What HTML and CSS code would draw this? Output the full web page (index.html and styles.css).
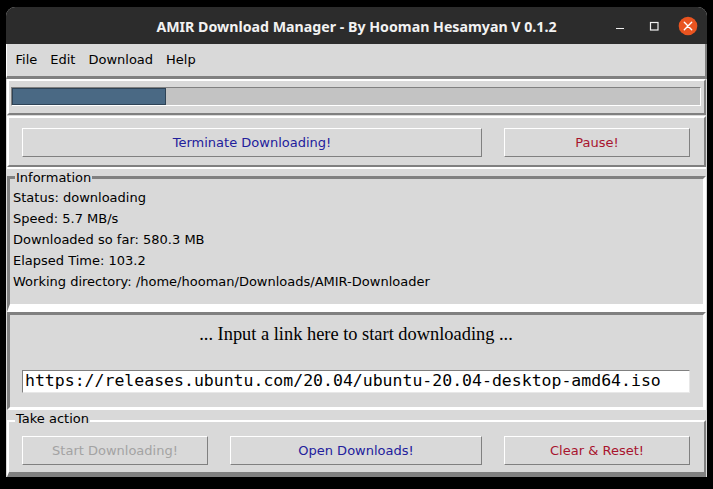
FILE: index.html
```html
<!DOCTYPE html>
<html>
<head>
<meta charset="utf-8">
<link rel="stylesheet" href="styles.css">
</head>
<body>
<div class="window">
  <header class="titlebar">
    <div class="spacer"></div>
    <h1 class="title">AMIR Download Manager - By Hooman Hesamyan V 0.1.2</h1>
    <div class="controls">
      <svg class="ctl-min" width="10" height="10" viewBox="0 0 10 10"><line x1="1" y1="7.5" x2="9" y2="7.5" stroke="#f0f0f0" stroke-width="1.2"/></svg>
      <svg class="ctl-max" width="10" height="10" viewBox="0 0 10 10"><rect x="1.5" y="1.5" width="7.5" height="7.5" fill="none" stroke="#f0f0f0" stroke-width="1.2"/></svg>
      <svg class="ctl-close" width="20" height="20" viewBox="0 0 20 20"><circle cx="10" cy="10" r="9.3" fill="#e95420"/><path d="M6.3 6.3 L13.7 13.7 M13.7 6.3 L6.3 13.7" stroke="#ffffff" stroke-width="1.4" stroke-linecap="round"/></svg>
    </div>
  </header>
  <nav class="menubar">
    <span class="menu-item">File</span>
    <span class="menu-item">Edit</span>
    <span class="menu-item">Download</span>
    <span class="menu-item">Help</span>
  </nav>
  <main class="content">
    <section class="progress-frame">
      <div class="trough"><div class="bar" style="width:154px"></div></div>
    </section>
    <section class="btn-frame">
      <div class="btn btn-blue">Terminate Downloading!</div>
      <div class="btn btn-red">Pause!</div>
    </section>
    <div class="info-wrap">
      <fieldset class="info">
        <legend class="info-legend">Information</legend>
        <p class="info-line">Status: downloading</p>
        <p class="info-line">Speed: 5.7 MB/s</p>
        <p class="info-line">Downloaded so far: 580.3 MB</p>
        <p class="info-line">Elapsed Time: 103.2</p>
        <p class="info-line">Working directory: /home/hooman/Downloads/AMIR-Downloader</p>
      </fieldset>
    </div>
    <section class="input-frame">
      <p class="prompt">... Input a link here to start downloading ...</p>
      <div class="entry">https://releases.ubuntu.com/20.04/ubuntu-20.04-desktop-amd64.iso</div>
    </section>
    <fieldset class="action">
      <legend class="action-legend">Take action</legend>
      <div class="action-grid">
        <div class="btn btn-disabled">Start Downloading!</div>
        <div class="btn btn-blue">Open Downloads!</div>
        <div class="btn btn-red">Clear &amp; Reset!</div>
      </div>
    </fieldset>
  </main>
</div>
</body>
</html>
```
FILE: styles.css
```css
html, body {
  margin: 0;
  padding: 0;
  background: #000;
  width: 713px;
  height: 489px;
  overflow: hidden;
}

.window {
  margin: 7px 0 0 6px;
  width: 701px;
  border-radius: 9px 9px 0 0;
  overflow: hidden;
  background: #d9d9d9;
  font-family: "DejaVu Sans", sans-serif;
  font-size: 13px;
  color: #000;
}

.titlebar {
  height: 37px;
  background: #2c2c2c;
  display: grid;
  grid-template-columns: 1fr auto 1fr;
  align-items: center;
}

.title {
  margin: 0;
  padding-top: 2px;
  font-family: "Noto Sans", sans-serif;
  font-weight: bold;
  font-size: 14.2px;
  color: #f2f2f2;
  white-space: nowrap;
}

.controls {
  justify-self: end;
  display: flex;
  align-items: center;
  padding-right: 9px;
}

.ctl-min { display: block; }
.ctl-max { display: block; margin-left: 24px; }
.ctl-close { display: block; margin-left: 19px; }

.menubar {
  height: 32px;
  border-left: 1px solid #fff;
  border-right: 2px solid #808080;
  border-bottom: 3px solid #808080;
  display: flex;
  align-items: center;
  padding-left: 2px;
  line-height: 32px;
}

.menu-item {
  padding: 0 6.5px;
}

.content {
  padding: 0 1px;
}

.progress-frame {
  border: 2px solid;
  border-color: #fff #808080 #808080 #fff;
  padding: 6px 3px 7px 2px;
}

.trough {
  height: 17px;
  border: 1px solid;
  border-color: #808080 #fff #fff #808080;
  background: #c3c3c3;
}

.bar {
  height: 100%;
  box-sizing: border-box;
  background: #4a6984;
  border: 1px solid #2e4356;
}

.btn-frame {
  margin-top: 1px;
  border: 2px solid;
  border-color: #fff #808080 #808080 #fff;
  padding: 10px 14px 8px 13px;
  display: grid;
  grid-template-columns: 1fr 186px;
  column-gap: 22px;
}

.btn {
  height: 29px;
  box-sizing: border-box;
  border: 1px solid;
  border-color: #fff #808080 #808080 #fff;
  background: #d9d9d9;
  display: flex;
  align-items: center;
  justify-content: center;
  font-size: 13px;
  white-space: nowrap;
}

.btn-blue { color: #22209c; }
.btn-red { color: #a8142e; }
.btn-disabled { color: #a3a3a3; }

.info-wrap {
  border-top: 2px solid #fff;
}

.info {
  margin: 0;
  min-width: 0;
  padding: 1px 3px 12px 3px;
  border-style: solid;
  border-width: 3px 3px 8px 3px;
  border-color: #808080 #fff #fff #808080;
}

.info-legend {
  margin-left: 2px;
  padding: 0 1px;
  line-height: 17px;
  font-size: 13px;
}

.info-line {
  margin: 0;
  line-height: 21px;
  white-space: nowrap;
}

.input-frame {
  border: 3px solid;
  border-color: #808080 #fff #fff #808080;
  padding: 8px 13px 14px 12px;
}

.prompt {
  margin: 0;
  text-align: center;
  font-family: "Liberation Serif", serif;
  font-size: 18.4px;
  line-height: 22px;
  color: #000;
  white-space: nowrap;
}

.entry {
  margin-top: 25px;
  height: 21px;
  border: 1px solid;
  border-color: #808080 #e8e8e8 #e8e8e8 #808080;
  background: #fff;
  padding-left: 2px;
  font-family: "DejaVu Sans Mono", monospace;
  font-size: 16.5px;
  line-height: 19px;
  white-space: nowrap;
  overflow: hidden;
}

.action {
  margin: 0;
  min-width: 0;
  padding: 4px 14px 7px 13px;
  border-style: solid;
  border-width: 2px 2px 5px 2px;
  border-color: #fff #808080 #808080 #fff;
}

.action-legend {
  margin-left: -7px;
  padding: 0 1px 5px 1px;
  line-height: 17px;
  font-size: 13px;
}

.action-grid {
  display: grid;
  grid-template-columns: 186px 1fr 186px;
  column-gap: 22px;
}
```
